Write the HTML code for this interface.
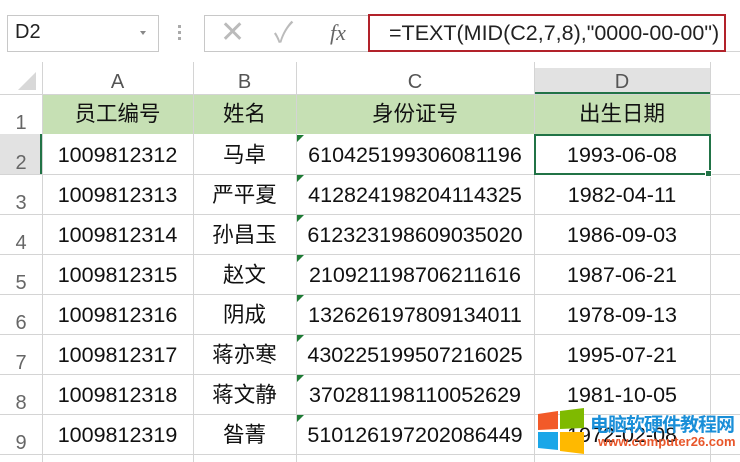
<!DOCTYPE html>
<html><head><meta charset="utf-8"><style>
*{margin:0;padding:0;box-sizing:border-box}
body{width:740px;height:462px;overflow:hidden;background:#fff;font-family:"Liberation Sans","Noto Sans CJK SC",sans-serif;position:relative;color:#111}
.a{position:absolute}
.vl{position:absolute;width:1px;background:#d4d4d4}
.hl{position:absolute;height:1px;background:#d4d4d4}
.c{position:absolute;text-align:center;font-size:21.5px;line-height:42px;height:40px}
.rn{position:absolute;left:0;width:42px;text-align:center;font-size:20px;color:#666;line-height:24px}
.ch{position:absolute;top:68px;height:26px;line-height:28px;text-align:center;font-size:20px;color:#555}
.tri{position:absolute;width:0;height:0;border-top:7px solid #1e7b34;border-right:7px solid transparent}
</style></head><body>
<div class="a" style="left:7px;top:15px;width:152px;height:37px;border:1px solid #c8c8c8"></div>
<div class="a" style="left:15px;top:21px;font-size:20px;color:#222">D2</div>
<div class="a" style="left:140px;top:31px;border-top:4px solid #888;border-left:3px solid transparent;border-right:3px solid transparent"></div>
<div class="a" style="left:178px;top:25px;width:3px;height:3px;background:#aaa;box-shadow:0 6px #aaa,0 12px #aaa"></div>
<div class="a" style="left:204px;top:15px;width:170px;height:37px;border:1px solid #c8c8c8;border-right:none"></div>
<div class="a" style="left:220px;top:16px;font-size:30px;color:#bbb;line-height:34px">✕</div>
<div class="a" style="left:274px;top:16px;font-size:28px;color:#bbb;line-height:34px">✓</div>
<div class="a" style="left:330px;top:20px;font-size:22px;color:#666;font-family:'Liberation Serif',serif;font-style:italic">fx</div>
<div class="a" style="left:368px;top:14px;width:358px;height:38px;border:2px solid #b2222a"></div>
<div class="a" style="left:389px;top:19px;font-size:21.5px;color:#222;line-height:28px">=TEXT(MID(C2,7,8),"0000-00-00")</div>
<div class="hl" style="left:726px;top:51px;width:14px"></div>
<div class="a" style="left:42px;top:94px;width:668px;height:40px;background:#c6e0b4"></div>
<div class="a" style="left:534px;top:68px;width:176px;height:26px;background:#e2e2e2;border-bottom:2px solid #217346"></div>
<div class="a" style="left:0;top:134px;width:42px;height:40px;background:#e2e2e2;border-right:2px solid #217346"></div>
<div class="a" style="left:18px;top:72px;width:0;height:0;border-bottom:18px solid #d8d8d8;border-left:18px solid transparent"></div>
<div class="vl" style="left:42px;top:62px;height:400px"></div>
<div class="vl" style="left:193px;top:62px;height:400px"></div>
<div class="vl" style="left:296px;top:62px;height:400px"></div>
<div class="vl" style="left:534px;top:62px;height:400px"></div>
<div class="vl" style="left:710px;top:62px;height:400px"></div>
<div class="hl" style="left:0;top:94px;width:740px"></div>
<div class="hl" style="left:0;top:174px;width:740px"></div>
<div class="hl" style="left:0;top:214px;width:740px"></div>
<div class="hl" style="left:0;top:254px;width:740px"></div>
<div class="hl" style="left:0;top:294px;width:740px"></div>
<div class="hl" style="left:0;top:334px;width:740px"></div>
<div class="hl" style="left:0;top:374px;width:740px"></div>
<div class="hl" style="left:0;top:414px;width:740px"></div>
<div class="hl" style="left:0;top:454px;width:740px"></div>
<div class="ch" style="left:42px;width:151px">A</div>
<div class="ch" style="left:193px;width:103px">B</div>
<div class="ch" style="left:296px;width:238px">C</div>
<div class="ch" style="left:534px;width:176px">D</div>
<div class="rn" style="top:111px">1</div><div class="rn" style="top:151px">2</div><div class="rn" style="top:191px">3</div><div class="rn" style="top:231px">4</div><div class="rn" style="top:271px">5</div><div class="rn" style="top:311px">6</div><div class="rn" style="top:351px">7</div><div class="rn" style="top:391px">8</div><div class="rn" style="top:431px">9</div>
<div class="a" style="left:534px;top:134px;width:177px;height:41px;border:2px solid #217346"></div>
<div class="a" style="left:705px;top:170px;width:7px;height:7px;background:#217346;border:1px solid #fff"></div>
<div id="rows"></div>
<div class="c" style="left:42px;top:93px;width:151px">员工编号</div>
<div class="c" style="left:193px;top:93px;width:103px">姓名</div>
<div class="c" style="left:296px;top:93px;width:238px">身份证号</div>
<div class="c" style="left:534px;top:93px;width:176px">出生日期</div>
<script>
var d=[["1009812312","马卓","610425199306081196","1993-06-08"],["1009812313","严平夏","412824198204114325","1982-04-11"],["1009812314","孙昌玉","612323198609035020","1986-09-03"],["1009812315","赵文","210921198706211616","1987-06-21"],["1009812316","阴成","132626197809134011","1978-09-13"],["1009812317","蒋亦寒","430225199507216025","1995-07-21"],["1009812318","蒋文静","370281198110052629","1981-10-05"],["1009812319","昝菁","510126197202086449","1972-02-08"]];
var h="";d.forEach(function(r,i){var t=134+i*40;
h+='<div class="c" style="left:42px;top:'+t+'px;width:151px">'+r[0]+'</div><div class="c" style="left:193px;top:'+t+'px;width:103px">'+r[1]+'</div><div class="c" style="left:296px;top:'+t+'px;width:238px">'+r[2]+'</div><div class="c" style="left:534px;top:'+t+'px;width:176px">'+r[3]+'</div><div class="tri" style="left:297px;top:'+(t+1)+'px"></div>';});
document.getElementById("rows").innerHTML=h;
</script>
<svg class="a" style="left:536px;top:408px" width="50" height="46" viewBox="0 0 50 46">
<polygon points="2,6 22,3 22,21 2,22" fill="#f25a29"/><polygon points="24,3 48,0 48,20 24,21" fill="#7fba00"/>
<polygon points="2,24 22,24 22,42 2,40" fill="#1aa6e8"/><polygon points="24,24 48,24 48,46 24,43" fill="#ffb900"/>
</svg>
<div class="a" style="left:590px;top:410px;font-size:19px;font-weight:bold;color:#1a8fd8;letter-spacing:-1px">电脑软硬件教程网</div>
<div class="a" style="left:598px;top:434px;font-size:13px;font-weight:bold;color:#e8562a">www.computer26.com</div>
</body></html>
